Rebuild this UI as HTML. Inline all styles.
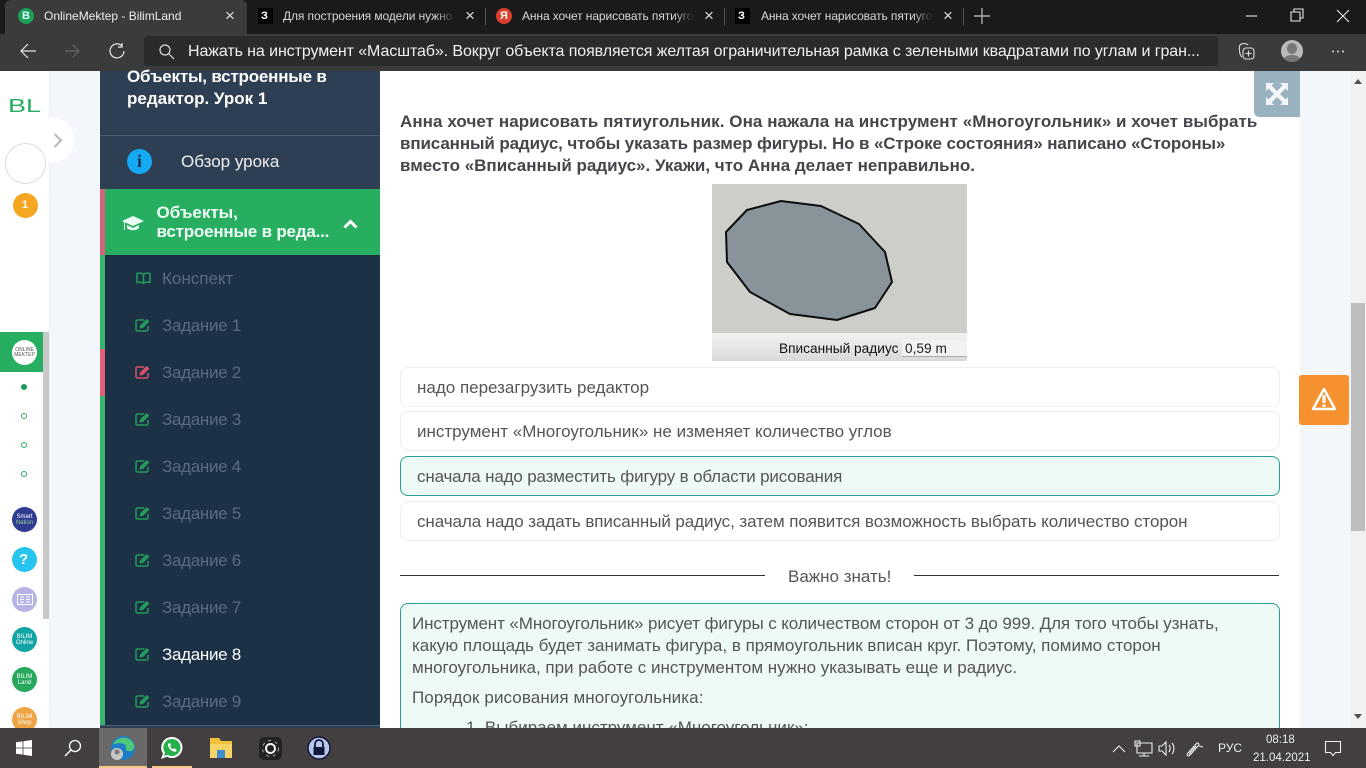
<!DOCTYPE html>
<html lang="ru"><head><meta charset="utf-8"><title>OnlineMektep - BilimLand</title>
<style>
html,body{margin:0;padding:0;width:1366px;height:768px;overflow:hidden;background:#fff;font-family:"Liberation Sans","Noto Sans CJK SC",sans-serif}
.a{position:absolute}
.t{position:absolute;white-space:nowrap;line-height:20px}
.tab{font-size:12px;color:#d8d8d8;top:6px}
.fade{letter-spacing:-.1px;-webkit-mask-image:linear-gradient(90deg,#000 88%,transparent);mask-image:linear-gradient(90deg,#000 88%,transparent)}
.side{font-size:17px;color:#5a6a7d;left:162px;letter-spacing:-.3px}
.opt{position:absolute;left:400px;width:878px;height:38px;border:1px solid #eee;border-radius:8px;background:#fff;box-sizing:content-box}
.opt span{position:absolute;left:16px;top:10px;font-size:17px;color:#555;white-space:nowrap;line-height:20px}
.body{font-size:17px;color:#555;left:412px}
.q{font-size:17px;font-weight:bold;color:#44464c;left:400px}
.c{position:absolute;left:12px;width:25px;height:25px;border-radius:50%}
.dot{position:absolute;left:21px;width:4px;height:4px;border:1px solid #27ae60;border-radius:50%}
svg{position:absolute;overflow:visible}
</style></head><body>
<svg width="0" height="0"><defs>
<g id="pen"><path d="M9 2H2.500C1.700 2 1 2.700 1 3.500v8C1 12.300 1.700 13 2.500 13h9c.8 0 1.500-.7 1.500-1.500V8" fill="none" stroke="currentColor" stroke-width="1.500"/><path d="M5 7.500 11.500 1l3 2.500L8 10l-3.500.5z" fill="currentColor"/></g>
</defs></svg>

<!-- browser chrome -->
<div class="a" style="left:0;top:0;width:1366px;height:35px;background:#1a1a1a"></div>
<div class="a" style="left:5px;top:0;width:242px;height:34px;background:#3b3b3b;border-radius:6px 6px 0 0"></div>
<div class="a" style="left:0;top:34px;width:1366px;height:37px;background:#3b3b3b"></div>
<div class="a" style="left:144px;top:36px;width:1074px;height:30px;background:#2b2b2b;border-radius:3px"></div>

<div class="a" style="left:18px;top:8px;width:16px;height:16px;border-radius:50%;background:#1f9e5a"></div>
<div class="t" style="left:22px;top:6px;font-size:11px;font-weight:bold;color:#dff">B</div>
<div class="t tab" style="left:44px;color:#eee">OnlineMektep - BilimLand</div>
<div class="t" style="left:225px;top:6px;font-size:17px;color:#ddd">×</div>
<div class="a" style="left:258px;top:8px;width:15px;height:16px;background:#000"></div>
<div class="t" style="left:261px;top:6px;font-size:11px;font-weight:bold;color:#fff">З</div>
<div class="t tab fade" style="left:283px;width:172px;overflow:hidden">Для построения модели нужно</div>
<div class="t" style="left:465px;top:6px;font-size:17px;color:#ddd">×</div>
<div class="a" style="left:485px;top:8px;width:1px;height:17px;background:#555"></div>
<div class="a" style="left:496px;top:8px;width:16px;height:16px;border-radius:50%;background:#d9412c"></div>
<div class="t" style="left:500px;top:6px;font-size:11px;font-weight:bold;color:#fff">Я</div>
<div class="t tab fade" style="left:522px;width:172px;overflow:hidden">Анна хочет нарисовать пятиугольник</div>
<div class="t" style="left:704px;top:6px;font-size:17px;color:#ddd">×</div>
<div class="a" style="left:724px;top:8px;width:1px;height:17px;background:#555"></div>
<div class="a" style="left:735px;top:8px;width:15px;height:16px;background:#000"></div>
<div class="t" style="left:738px;top:6px;font-size:11px;font-weight:bold;color:#fff">З</div>
<div class="t tab fade" style="left:761px;width:172px;overflow:hidden">Анна хочет нарисовать пятиугольник</div>
<div class="t" style="left:943px;top:6px;font-size:17px;color:#ddd">×</div>
<div class="a" style="left:963px;top:8px;width:1px;height:17px;background:#555"></div>
<svg style="left:974px;top:8px" width="16" height="16"><path d="M8 0v16M0 8h16" stroke="#aaa" stroke-width="1.400"/></svg>
<svg style="left:1245px;top:9px" width="110" height="14" fill="none" stroke="#e8e8e8" stroke-width="1.100"><path d="M1 7h11"/><path d="M46 3h9v9h-9zM49 3V0h9v9h-3"/><path d="M92 1l12 12M104 1 92 13"/></svg>

<svg style="left:20px;top:43px" width="100" height="16" fill="none"><path d="M16 8H1M8 1 1 8l7 7" stroke="#e6e6e6" stroke-width="1.200"/><path d="M45 8H59M53 2l6 6-6 6" stroke="#666" stroke-width="1.200"/><path d="M102 3a7 7 0 1 0 2 5M102 0v4h-4" stroke="#e6e6e6" stroke-width="1.200"/></svg>
<svg style="left:159px;top:44px" width="16" height="16" fill="none" stroke="#ddd" stroke-width="1.200"><circle cx="6" cy="6" r="5"/><path d="M10 10l5 5"/></svg>
<div class="t" style="left:188px;top:42px;font-size:16px;color:#f0f0f0;letter-spacing:-.09px">Нажать на инструмент «Масштаб». Вокруг объекта появляется желтая ограничительная рамка с зелеными квадратами по углам и гран...</div>
<svg style="left:1238px;top:43px" width="18" height="18" fill="none" stroke="#ddd" stroke-width="1.100"><path d="M4 14C1 12 1 4 2 2c2-2 6-2 8 0"/><rect x="5" y="5" width="11" height="11" rx="3"/><path d="M10.500 7.500v6M7.500 10.500h6"/></svg>
<div class="a" style="left:1281px;top:40px;width:22px;height:22px;border-radius:50%;background:#b9b9b9;overflow:hidden"><div class="a" style="left:6px;top:3px;width:10px;height:11px;border-radius:50%;background:#777"></div><div class="a" style="left:2px;top:15px;width:18px;height:12px;border-radius:50%;background:#777"></div></div>
<svg style="left:1332px;top:50px" width="14" height="3" fill="#ddd"><circle cx="1" cy="1.500" r="1"/><circle cx="6" cy="1.500" r="1"/><circle cx="11" cy="1.500" r="1"/></svg>

<!-- page background -->
<div class="a" style="left:50px;top:71px;width:50px;height:657px;background:#f3f6fa"></div>
<div class="a" style="left:1300px;top:71px;width:50px;height:657px;background:#f3f6fa"></div>
<div class="a" style="left:1350px;top:71px;width:16px;height:657px;background:#f1f1f1"></div>
<div class="a" style="left:1351px;top:303px;width:14px;height:228px;background:#bdbdbd"></div>
<svg style="left:1353px;top:79px" width="10" height="640"><path d="M1 5h8L5 0zM1 635h8l-4 5z" fill="#505050"/></svg>

<!-- left rail -->
<div class="a" style="left:0;top:71px;width:50px;height:657px;background:#fff;border-right:1px solid #f0f0f0;box-sizing:border-box"></div>
<div class="a" style="left:43px;top:332px;width:6px;height:287px;background:#c8c8c8"></div>
<div class="a" style="left:8px;top:96px;font-size:18px;color:#27ae60;line-height:20px;transform:scaleX(1.5);transform-origin:left">BL</div>
<div class="a" style="left:28px;top:117px;width:46px;height:46px;border-radius:50%;background:#fff"></div>
<svg style="left:53px;top:133px" width="10" height="15" fill="none"><path d="M1.500 1l6.500 6.500-6.500 6.500" stroke="#bbb" stroke-width="2.200"/></svg>
<div class="a" style="left:5px;top:143px;width:39px;height:39px;border-radius:50%;background:#fff;border:1px solid #ddd"></div>
<div class="a" style="left:13px;top:193px;width:25px;height:25px;border-radius:50%;background:#f5a623"></div>
<div class="t" style="left:22px;top:195px;font-size:11px;font-weight:bold;color:#fff">1</div>
<div class="a" style="left:0;top:332px;width:43px;height:40px;background:#27ae60"></div>
<div class="a" style="left:12px;top:340px;width:25px;height:25px;border-radius:50%;background:#fff"></div>
<div class="a" style="left:14px;top:348px;width:21px;text-align:center;font-size:5px;line-height:5px;color:#555">ONLINE<br>MEKTEP</div>
<div class="a" style="left:21px;top:384px;width:6px;height:6px;border-radius:50%;background:#1f9e5a"></div>
<div class="dot" style="top:413px"></div><div class="dot" style="top:442px"></div><div class="dot" style="top:471px"></div>
<div class="c" style="top:507px;background:#2f3c92"></div>
<div class="a" style="left:14px;top:514px;width:21px;text-align:center;font-size:6px;line-height:6px;color:#fff">Smart<br><span style="color:#8fd18f">Nation</span></div>
<div class="c" style="top:547px;background:#27c4f0"></div>
<div class="t" style="left:19px;top:550px;font-size:15px;font-weight:bold;color:#fff">?</div>
<div class="c" style="top:587px;background:#b6b4e6"></div>
<svg style="left:17px;top:594px" width="16" height="11" fill="none" stroke="#fff"><rect x=".5" y=".5" width="15" height="10"/><path d="M3 3h4M3 5.500h4M3 8h4M9 3h4M9 5.500h4M9 8h4"/></svg>
<div class="c" style="top:627px;background:#13a5a5"></div>
<div class="a" style="left:14px;top:634px;width:21px;text-align:center;font-size:6px;line-height:6px;color:#fff">BILIM<br>Online</div>
<div class="c" style="top:667px;background:#27a85c"></div>
<div class="a" style="left:14px;top:674px;width:21px;text-align:center;font-size:6px;line-height:6px;color:#fff">BILIM<br>Land</div>
<div class="c" style="top:707px;background:#f0a445"></div>
<div class="a" style="left:14px;top:714px;width:21px;text-align:center;font-size:6px;line-height:6px;color:#fff">BILIM<br>Shop</div>

<!-- lesson sidebar -->
<div class="a" style="left:100px;top:71px;width:280px;height:657px;background:#1c3046"></div>
<div class="a" style="left:100px;top:71px;width:280px;height:118px;background:#2e3f53"></div>
<div class="a" style="left:100px;top:135px;width:280px;height:1px;background:#4a5a6d"></div>
<div class="t" style="left:127px;top:67px;font-size:17px;font-weight:bold;color:#fff;letter-spacing:-.2px">Объекты, встроенные в</div>
<div class="t" style="left:127px;top:89px;font-size:17px;font-weight:bold;color:#fff">редактор. Урок 1</div>
<div class="a" style="left:127px;top:149px;width:25px;height:25px;border-radius:50%;background:#16aaf5"></div>
<div class="t" style="left:127px;top:151px;width:25px;text-align:center;font-size:18px;font-weight:bold;color:#12324e;font-family:'Liberation Serif',serif">i</div>
<div class="t" style="left:181px;top:152px;font-size:17px;color:#eef1f4">Обзор урока</div>

<div class="a" style="left:100px;top:189px;width:5px;height:539px;background:#35b56e"></div>
<div class="a" style="left:100px;top:189px;width:5px;height:66px;background:#d4637a"></div>
<div class="a" style="left:100px;top:349px;width:5px;height:47px;background:#e0607a"></div>
<div class="a" style="left:105px;top:189px;width:275px;height:66px;background:#27ae60"></div>
<svg style="left:122px;top:216px" width="22" height="16" fill="#eafff3"><path d="M11 0 22 5 11 10 0 5z"/><path d="M5 9v3c3 3 9 3 12 0V9l-6 3zM2 6h1v8H2z"/></svg>
<div class="t" style="left:156.500px;top:203px;font-size:17px;font-weight:bold;color:#effff6">Объекты,</div>
<div class="t" style="left:156.500px;top:222px;font-size:17px;font-weight:bold;color:#effff6;letter-spacing:-.2px">встроенные в реда...</div>
<svg style="left:343px;top:219px" width="15" height="10" fill="none"><path d="M1.500 8.500 7.500 2.500l6 6" stroke="#fff" stroke-width="3"/></svg>

<svg style="left:136px;top:272px" width="15" height="13" fill="none" stroke="#239a58" stroke-width="1.500"><path d="M7.500 2.500C6 1 3 1 1 1.500v9c2-.5 5-.5 6.500 1 1.500-1.500 4.500-1.500 6.500-1v-9c-2-.5-5-.5-6.500 1zM7.500 2.500v9"/></svg>
<div class="t side" style="top:269px;letter-spacing:0">Конспект</div>
<svg style="left:135px;top:318px;color:#239a58" width="16" height="14"><use href="#pen"/></svg><div class="t side" style="top:316px">Задание 1</div>
<svg style="left:135px;top:365px;color:#d9506c" width="16" height="14"><use href="#pen"/></svg><div class="t side" style="top:363px">Задание 2</div>
<svg style="left:135px;top:412px;color:#239a58" width="16" height="14"><use href="#pen"/></svg><div class="t side" style="top:410px">Задание 3</div>
<svg style="left:135px;top:459px;color:#239a58" width="16" height="14"><use href="#pen"/></svg><div class="t side" style="top:457px">Задание 4</div>
<svg style="left:135px;top:506px;color:#239a58" width="16" height="14"><use href="#pen"/></svg><div class="t side" style="top:504px">Задание 5</div>
<svg style="left:135px;top:553px;color:#239a58" width="16" height="14"><use href="#pen"/></svg><div class="t side" style="top:551px">Задание 6</div>
<svg style="left:135px;top:600px;color:#239a58" width="16" height="14"><use href="#pen"/></svg><div class="t side" style="top:598px">Задание 7</div>
<svg style="left:135px;top:647px;color:#239a58" width="16" height="14"><use href="#pen"/></svg><div class="t side" style="top:645px;color:#fff">Задание 8</div>
<svg style="left:135px;top:694px;color:#239a58" width="16" height="14"><use href="#pen"/></svg><div class="t side" style="top:692px">Задание 9</div>
<div class="a" style="left:100px;top:725px;width:280px;height:3px;background:#2e3f53;border-top:1px solid #4a5f78;box-sizing:border-box"></div>

<!-- content -->
<div class="t q" style="top:112px;letter-spacing:.067px">Анна хочет нарисовать пятиугольник. Она нажала на инструмент «Многоугольник» и хочет выбрать</div>
<div class="t q" style="top:134px;letter-spacing:-.12px">вписанный радиус, чтобы указать размер фигуры. Но в «Строке состояния» написано «Стороны»</div>
<div class="t q" style="top:156px">вместо «Вписанный радиус». Укажи, что Анна делает неправильно.</div>

<div class="a" style="left:712px;top:184px;width:255px;height:149px;background:#cdcdc9"></div>
<div class="a" style="left:712px;top:333px;width:255px;height:28px;background:linear-gradient(#f2f2f2,#d9d9d9)"></div>
<svg style="left:0;top:0" width="1366" height="768"><polygon points="726,232 747,210 781,201 821,206 859,224 885,252 892,282 875,308 837,320 790,314 750,292 727,262" fill="#88939a" stroke="#0d0d0d" stroke-width="2" stroke-linejoin="round"/></svg>
<div class="a" style="left:902px;top:340px;width:65px;height:16px;background:#f2f2f2;border-bottom:1px solid #aaa"></div>
<div class="t" style="left:779px;top:339px;font-size:13.700px;color:#111">Вписанный радиус</div>
<div class="t" style="left:905px;top:339px;font-size:13.700px;color:#222">0,59 m</div>

<div class="opt" style="top:367px"><span>надо перезагрузить редактор</span></div>
<div class="opt" style="top:411px"><span>инструмент «Многоугольник» не изменяет количество углов</span></div>
<div class="opt" style="top:456px;background:#eefaf5;border-color:#2a9d8f"><span style="letter-spacing:-.16px">сначала надо разместить фигуру в области рисования</span></div>
<div class="opt" style="top:501px"><span style="letter-spacing:-.08px">сначала надо задать вписанный радиус, затем появится возможность выбрать количество сторон</span></div>

<div class="a" style="left:400px;top:575px;width:365px;height:1px;background:#333"></div>
<div class="a" style="left:914px;top:575px;width:365px;height:1px;background:#333"></div>
<div class="t" style="left:788px;top:567px;font-size:17px;color:#555">Важно знать!</div>

<div class="a" style="left:400px;top:603px;width:878px;height:140px;background:#eefaf5;border:1px solid #2a9d8f;border-radius:8px"></div>
<div class="t body" style="top:614px;letter-spacing:-.1px">Инструмент «Многоугольник» рисует фигуры с количеством сторон от 3 до 999. Для того чтобы узнать,</div>
<div class="t body" style="top:636px">какую площадь будет занимать фигура, в прямоугольник вписан круг. Поэтому, помимо сторон</div>
<div class="t body" style="top:658px">многоугольника, при работе с инструментом нужно указывать еще и радиус.</div>
<div class="t body" style="top:688px;letter-spacing:.09px">Порядок рисования многоугольника:</div>
<div class="t body" style="top:718px;left:466px">1. Выбираем инструмент «Многоугольник»;</div>

<!-- expand + warning -->
<div class="a" style="left:1254px;top:71px;width:46px;height:46px;background:#9ab2c0;border-radius:0 0 0 5px"></div>
<svg style="left:1266px;top:83px" width="22" height="22" fill="#f4f7f9"><path d="M0 0h8L5.500 2.500 11 8l5.500-5.500L14 0h8v8l-2.500-2.500L14 11l5.500 5.500L22 14v8h-8l2.500-2.500L11 14l-5.500 5.500L8 22H0v-8l2.500 2.500L8 11 2.500 5.500 0 8z"/></svg>
<div class="a" style="left:1299px;top:375px;width:50px;height:50px;background:#f5922f;border-radius:3px"></div>
<svg style="left:1311px;top:387px" width="26" height="24" fill="none"><path d="M13 2 24 22H2z" stroke="#fff" stroke-width="2.400" stroke-linejoin="round"/><path d="M13 8v8M13 17.500v2.500" stroke="#fff" stroke-width="3"/></svg>

<!-- taskbar -->
<div class="a" style="left:0;top:728px;width:1366px;height:40px;background:#433f40"></div>
<div class="a" style="left:99px;top:728px;width:48px;height:40px;background:#6b6869"></div>
<div class="a" style="left:99px;top:766px;width:48px;height:2px;background:#f5c98a"></div>
<div class="a" style="left:152px;top:766px;width:40px;height:2px;background:#f5c98a"></div>
<svg style="left:16px;top:740px" width="16" height="16" fill="#fff"><path d="M0 2.300 6.600 1.400V7.600H0zM7.400 1.300 16 0V7.600H7.400zM0 8.400H6.600V14.600L0 13.700zM7.400 8.400H16V16L7.400 14.700z"/></svg>
<svg style="left:64px;top:739px" width="18" height="18" fill="none" stroke="#fff" stroke-width="1.300"><circle cx="11" cy="7" r="5.500"/><path d="M7 11 1 17"/></svg>
<svg style="left:110px;top:735px" width="26" height="26"><circle cx="13" cy="13" r="12" fill="#1e7fc4"/><path d="M3 9C7 1 21 0 24 10c1 5-3 7-6 6-4-1 0-5-4-7-4-2-8 0-11 0z" fill="#4fc97a"/><circle cx="7" cy="19" r="6" fill="#c8c8c8"/><circle cx="7" cy="17" r="2.500" fill="#777"/></svg>
<svg style="left:161px;top:737px" width="22" height="22"><path d="M11 0a10.500 10.500 0 0 1 0 21c-2 0-3.500-.5-5-1.300L0 22l2-5.500A10.500 10.500 0 0 1 11 0z" fill="#fff"/><path d="M11 2a8.500 8.500 0 0 1 0 17c-1.800 0-3.200-.5-4.500-1.300L3 19l1-3.500A8.500 8.500 0 0 1 11 2z" fill="#25b04c"/><path d="M7.500 6.500c-1.500 2 .5 5 2.500 6.500s4 2.500 5.500 1l-.3-1.800-2.200-1-1 1c-1.500-.7-2.300-1.700-2.900-2.900l1-1-1-2.200z" fill="#fff"/></svg>
<svg style="left:210px;top:738px" width="22" height="20"><path d="M0 0h9l2 3h11v17H0z" fill="#f3c13a"/><path d="M0 6h22v14H0z" fill="#f6d365"/><rect x="7" y="12" width="8" height="8" fill="#3f8fd0"/></svg>
<div class="a" style="left:259px;top:737px;width:23px;height:23px;background:#222;border-radius:5px"></div>
<svg style="left:259px;top:737px" width="23" height="23" fill="none"><circle cx="11.500" cy="11.500" r="4.500" stroke="#eee" stroke-width="2"/><circle cx="11.500" cy="11.500" r="8" stroke="#aaa" stroke-dasharray="3 4"/></svg>
<svg style="left:307px;top:736px" width="24" height="24"><circle cx="12" cy="12" r="11" fill="#b9c6ea" stroke="#10183c" stroke-width="1.500"/><path d="M8 11V8a4 4 0 0 1 8 0v3" fill="none" stroke="#10183c" stroke-width="1.800"/><rect x="6.500" y="11" width="11" height="8" fill="#10183c"/></svg>

<svg style="left:1112px;top:741px" width="190" height="16" fill="none" stroke="#eee" stroke-width="1.100"><path d="M1 11l6-6 6 6"/><path d="M25 2h15v10H25zM32 12v3M27 15h10M23 0h5v5h-5z"/><path d="M47 5h3l4-4v13l-4-4h-3zM57 4c1.500 2 1.500 5 0 7M60 2c2.500 3 2.500 8 0 11"/><path d="M78 14c-2 2-4 0-2-2l8-9c2-2 4 0 2 2l-7 8c-1 1-2 0-1-1l6-7M87 5l4 1"/></svg>
<div class="t" style="left:1218px;top:738px;font-size:12px;color:#eee">РУС</div>
<div class="t" style="left:1266px;top:730px;font-size:11.500px;color:#eee">08:18</div>
<div class="t" style="left:1253px;top:748px;font-size:11.500px;color:#eee">21.04.2021</div>
<svg style="left:1325px;top:741px" width="17" height="16" fill="none" stroke="#eee" stroke-width="1.100"><path d="M.5.500h15v11h-5L8 14.500 5.500 11.500h-5z"/></svg>
</body></html>
